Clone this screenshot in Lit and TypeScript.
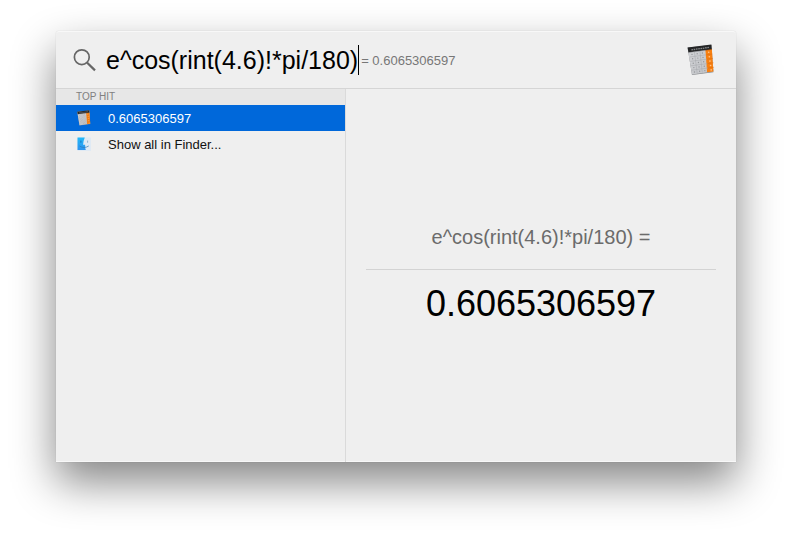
import { LitElement, html, css, svg } from "lit";
import { customElement, property, state } from "lit/decorators.js";
import { classMap } from "lit/directives/class-map.js";

@customElement("calculator-icon")
class CalculatorIcon extends LitElement {
  static styles = css`
    :host { display: block; }
    svg { display: block; width: 100%; height: 100%; }
  `;

  render() {
    const rows = [0, 1, 2, 3, 4];
    const cols = [0, 1, 2];
    return html`
      <svg viewBox="0 0 28 32" aria-hidden="true">
        <defs>
          <linearGradient id="body" x1="0" y1="0" x2="1" y2="1">
            <stop offset="0" stop-color="#d3d4d7" />
            <stop offset="1" stop-color="#c0c2c6" />
          </linearGradient>
        </defs>
        <path d="M0.6 3.6 L5 31 L26.4 28.2 L24.4 1 Z" fill="#85878a" />
        <path d="M0.6 4 L24.4 1 L26.4 27.4 L5 30.4 Z" fill="url(#body)" />
        <path d="M18.4 5.4 L24.8 4.6 L26.4 27.4 L20.1 28.2 Z" fill="#f88010" />
        <path d="M0.6 3.6 L24.4 0.6 L24.8 5.4 L1.4 8.5 Z" fill="#242526" />
        <path d="M4.4 5.8 L22.4 3.4" stroke="#85888a" stroke-width="1.3" stroke-dasharray="1.6 0.7" />
        ${rows.map((r) => svg`
          <g transform="translate(${r * 0.62} ${r * 4.4})">
            <path d="M2 8.6 L18.6 6.4" stroke="#a4a6aa" stroke-width="0.5" />
            <path d="M18.6 6.4 L24.6 5.6" stroke="#d9690f" stroke-width="0.5" />
            ${cols.map((c) => svg`<circle cx=${5 + c * 5.2} cy=${10.4 - c * 0.7} r="0.7" fill="#96989c" />`)}
            <circle cx="21.7" cy="8.3" r="0.8" fill="#ffc48d" />
          </g>
        `)}
        <path d="M7.4 7.8 L10.2 29.4 M12.9 7 L15.3 28.7" stroke="#a4a6aa" stroke-width="0.5" />
      </svg>
    `;
  }
}

@customElement("finder-icon")
class FinderIcon extends LitElement {
  static styles = css`
    :host { display: block; }
    svg { display: block; width: 100%; height: 100%; }
  `;

  render() {
    return html`
      <svg viewBox="0 0 14 14" aria-hidden="true">
        <defs>
          <linearGradient id="blue" x1="0" y1="0" x2="0" y2="1">
            <stop offset="0" stop-color="#22b9f8" />
            <stop offset="1" stop-color="#2e93ef" />
          </linearGradient>
        </defs>
        <rect x="0.5" y="0.5" width="13.5" height="13.5" rx="0.6" fill="#e0eaf4" />
        <path d="M0.5 0.5 H7.8 Q6.3 3.8 6.1 7.8 H8.1 Q8 10.8 8.8 13 H0.5 Z" fill="url(#blue)" />
        <path d="M3.9 4 V5.3" stroke="#1467ab" stroke-width="0.8" stroke-linecap="round" />
        <path d="M10.6 4 V5.3" stroke="#7ea6c8" stroke-width="0.8" stroke-linecap="round" />
        <path d="M2.8 9.2 Q7 12 11.4 9.2" fill="none" stroke="#2c78b8" stroke-width="0.7" stroke-linecap="round" />
      </svg>
    `;
  }
}

@customElement("result-list")
class ResultList extends LitElement {
  @property() answer = "";
  @state() private selected = 0;

  static styles = css`
    :host { display: block; }
    .heading {
      margin: 0;
      padding-left: 20px;
      background: #e7e7e7;
      color: #808080;
      font-size: 10px;
      font-weight: 400;
      line-height: 16px;
    }
    .list { margin: 0; padding: 0; list-style: none; }
    .row {
      display: flex;
      align-items: center;
      gap: 16px;
      box-sizing: border-box;
      width: 100%;
      height: 26px;
      padding: 0 20px;
      border: 0;
      background: none;
      color: #111;
      font: inherit;
      font-size: 13px;
      text-align: left;
    }
    .row.selected { background: #0068da; color: #fff; }
    .icon { display: flex; justify-content: center; width: 16px; }
    .calculator { width: 14px; height: 16px; }
    .finder { width: 14px; height: 14px; }
  `;

  render() {
    const rows = [
      { label: this.answer, icon: html`<calculator-icon class="calculator"></calculator-icon>` },
      { label: "Show all in Finder...", icon: html`<finder-icon class="finder"></finder-icon>` },
    ];
    return html`
      <h2 class="heading">TOP HIT</h2>
      <ul class="list">
        ${rows.map((row, i) => html`
          <li>
            <button
              type="button"
              class=${classMap({ row: true, selected: i === this.selected })}
              @click=${() => (this.selected = i)}
            >
              <span class="icon">${row.icon}</span>
              <span>${row.label}</span>
            </button>
          </li>
        `)}
      </ul>
    `;
  }
}

@customElement("app-root")
class AppRoot extends LitElement {
  @state() private query = "e^cos(rint(4.6)!*pi/180)";
  private answer = "0.6065306597";

  static styles = css`
    :host {
      display: flex;
      box-sizing: border-box;
      min-height: 100vh;
      padding: 31px 56px 80px;
      background: #fff;
      font-family: "Liberation Sans", Arial, Helvetica, sans-serif;
    }
    .panel {
      display: flex;
      flex-direction: column;
      flex: 1;
      min-width: 0;
      border-radius: 3px 3px 0 0;
      background: #efefef;
      box-shadow:
        inset 0 1px 0 #f8f8f8,
        inset 0 -1px 0 #f8f8f8,
        0 0 1px rgba(0, 0, 0, 0.25),
        0 20px 44px rgba(0, 0, 0, 0.48);
    }
    .search {
      display: flex;
      align-items: center;
      height: 57px;
      padding: 0 21px 0 16px;
      border-bottom: 1px solid #d5d5d5;
    }
    .glass { flex: none; width: 26px; height: 26px; margin-right: 8px; }
    .query {
      field-sizing: content;
      min-width: 1px;
      padding: 0;
      border: 0;
      outline: 0;
      background: none;
      color: #000;
      font: inherit;
      font-size: 25px;
      line-height: 32px;
      caret-color: transparent;
    }
    .caret { width: 1px; height: 30px; margin-right: 2px; background: #000; }
    .inline-answer { flex: 1; padding-top: 2px; color: #777; font-size: 13px; line-height: 16px; }
    .app-icon { flex: none; width: 28px; height: 32px; }
    .content { display: grid; grid-template-columns: 290px 1fr; flex: 1; }
    .sidebar { border-right: 1px solid #dadada; }
    .preview {
      display: flex;
      flex-direction: column;
      justify-content: center;
      padding: 0 20px;
      text-align: center;
    }
    .expression {
      padding-bottom: 20px;
      border-bottom: 1px solid #d3d3d3;
      color: #6b6b6b;
      font-size: 20px;
      line-height: 24px;
    }
    .answer { padding-top: 12px; color: #000; font-size: 36px; line-height: 44px; }
  `;

  render() {
    return html`
      <main class="panel">
        <header class="search">
          <svg class="glass" viewBox="0 0 26 26" aria-hidden="true">
            <g fill="none" stroke="#666">
              <circle cx="9.8" cy="10.2" r="7.4" stroke-width="1.7" />
              <path d="M15.2 15.8 L23 23.4" stroke-width="2.2" />
            </g>
          </svg>
          <input
            class="query"
            type="text"
            aria-label="Search"
            spellcheck="false"
            .value=${this.query}
            @input=${(e: Event) => (this.query = (e.target as HTMLInputElement).value)}
          />
          <span class="caret"></span>
          <output class="inline-answer">= ${this.answer}</output>
          <calculator-icon class="app-icon"></calculator-icon>
        </header>
        <div class="content">
          <nav class="sidebar" aria-label="Results">
            <result-list .answer=${this.answer}></result-list>
          </nav>
          <section class="preview" aria-label="Calculation">
            <div class="expression">${this.query} =</div>
            <div class="answer">${this.answer}</div>
          </section>
        </div>
      </main>
    `;
  }
}
